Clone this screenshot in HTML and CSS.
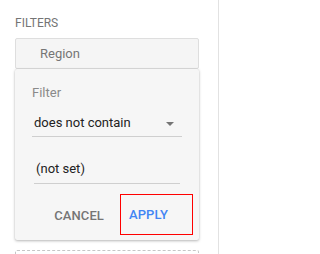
FILE: index.html
```html
<!DOCTYPE html>
<html>
<head>
<meta charset="utf-8">
<link rel="stylesheet" href="styles.css">
</head>
<body>
<div class="sidebar">
  <div class="section-title">FILTERS</div>
  <div class="chip">Region</div>
  <div class="card">
    <div class="fields">
      <div class="field-label">Filter</div>
      <div class="select">
        <span class="select-value">does not contain</span>
        <svg class="arrow" width="8" height="4" viewBox="0 0 8 4"><path d="M0 0H8L4 4Z" fill="#757575"/></svg>
      </div>
      <div class="input">(not set)</div>
    </div>
    <div class="actions">
      <div class="btn cancel">CANCEL</div>
      <div class="btn apply">APPLY</div>
    </div>
  </div>
  <div class="dashed"></div>
</div>
</body>
</html>
```
FILE: styles.css
```css
html, body {
  margin: 0;
  padding: 0;
  background: #ffffff;
  font-family: Roboto, "Liberation Sans", Arial, sans-serif;
  overflow: hidden;
}
.sidebar {
  box-sizing: border-box;
  width: 219px;
  height: 254px;
  overflow: hidden;
  border-right: 1px solid #e2e2e2;
  padding: 16px 19px 0 15px;
}
.section-title {
  font-size: 12px;
  line-height: 14px;
  color: #757575;
  margin-bottom: 8px;
}
.chip {
  box-sizing: border-box;
  height: 31px;
  line-height: 29px;
  border: 1px solid #dedede;
  border-radius: 2px;
  background: #f5f5f5;
  padding-left: 24px;
  font-size: 13px;
  color: #757575;
}
.card {
  background: #f6f6f6;
  box-shadow: 0 1px 3px rgba(0,0,0,0.28), 0 0 1px rgba(0,0,0,0.12);
  border-radius: 2px;
  padding: 16px 0 5px 0;
}
.fields {
  padding: 0 17px;
}
.field-label {
  font-size: 13px;
  line-height: 16px;
  color: #8a8a8a;
}
.select {
  margin-top: 9px;
  height: 26px;
  border-bottom: 1px solid #cfcfcf;
  display: flex;
  align-items: center;
  justify-content: space-between;
  padding: 0 8px 0 2px;
}
.select-value {
  font-size: 13px;
  line-height: 26px;
  color: #222222;
}
.arrow {
  display: block;
  margin-top: 1px;
}
.input {
  margin: 18px 2px 0 2px;
  height: 28px;
  line-height: 28px;
  border-bottom: 1px solid #cfcfcf;
  padding-left: 2px;
  font-size: 13px;
  color: #222222;
}
.actions {
  display: flex;
  justify-content: flex-end;
  gap: 8px;
  padding-right: 6px;
  margin-top: 10px;
}
.btn {
  box-sizing: border-box;
  height: 41px;
  line-height: 41px;
  padding: 1px 8px 0 8px;
  font-size: 13px;
  font-weight: 500;
  letter-spacing: 0.1px;
}
.cancel {
  color: #757575;
}
.apply {
  color: #4285f4;
  width: 73px;
  border: 1px solid #ff0000;
  line-height: 38px;
}
.dashed {
  margin-top: 10px;
  height: 40px;
  border: 1px dashed #c6c6c6;
  border-radius: 2px;
}
```
